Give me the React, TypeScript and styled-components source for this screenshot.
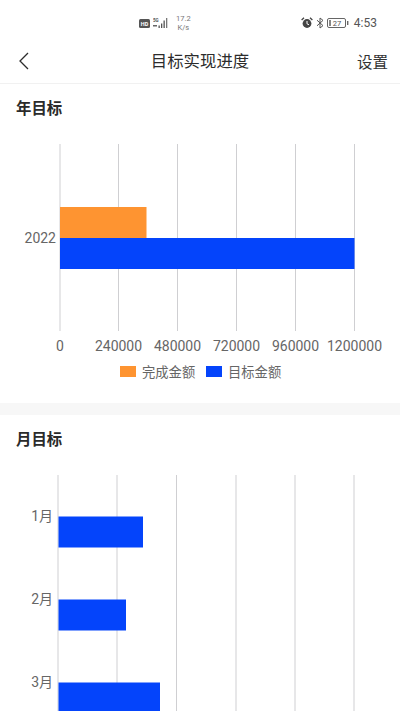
import React from "react";
import styled, { createGlobalStyle } from "styled-components";

const Global = createGlobalStyle`
  html, body { margin: 0; padding: 0; background: #fff; overflow: hidden; }
  body { font-family: "Noto Sans CJK SC", "Noto Sans", sans-serif; }
`;
const Page = styled.div`
  width: 400px; height: 711px; overflow: hidden; background: #fff;
  display: flex; flex-direction: column;
`;
const StatusBar = styled.div`
  height: 42px; flex: none; box-sizing: border-box; padding: 12px 23px 0 139px;
  display: flex; align-items: flex-start; justify-content: space-between; color: #555;
`;
const StatusGroup = styled.div`
  display: flex; align-items: center; gap: 3px; height: 22px;
`;
const Speed = styled.div`
  font-family: "Roboto", sans-serif; font-size: 7.5px; line-height: 9px; color: #777;
  text-align: center; margin-left: 3px;
`;
const Clock = styled.span`
  font-family: "Roboto", sans-serif; font-size: 12px; color: #555; margin-left: 2px;
`;
const NavBar = styled.header`
  height: 42px; flex: none; box-sizing: border-box; border-bottom: 1px solid #f1f1f1;
  display: flex; align-items: center; justify-content: space-between;
  padding: 0 12px 3px 18px; position: relative;
`;
const NavTitle = styled.h1`
  position: absolute; left: 0; right: 0; top: 6px; margin: 0; text-align: center;
  font-size: 16.4px; line-height: 24px; font-weight: 400; color: #2c2c2c; pointer-events: none;
`;
const NavAction = styled.span`
  font-size: 15.5px; line-height: 24px; color: #333;
`;
const Section = styled.section`
  flex: none; display: flex; flex-direction: column;
`;
const SectionTitle = styled.h2`
  margin: 0; padding: 12px 0 1px 16px; font-size: 15.4px; line-height: 22px;
  font-weight: 700; color: #2b2b2b;
`;
const Band = styled.div`
  height: 12px; flex: none; background: #f7f7f7;
`;
const Chart = styled.svg`
  display: block; flex: none; width: 400px;
`;
const GridLine = styled.line`
  stroke: #cfcfd2; stroke-width: 1;
`;
const AxisLabel = styled.text`
  font-family: "Roboto", "Noto Sans CJK SC", sans-serif; font-size: 14px; fill: #666;
`;
const LegendLabel = styled.text`
  font-family: "Noto Sans CJK SC", sans-serif; font-size: 13.3px; fill: #666;
`;

const ORANGE = "#fe9431";
const BLUE = "#0444fb";

const yearGrid = [60, 118.5, 177.5, 236.5, 295.5, 354.5];
const yearTicks = ["0", "240000", "480000", "720000", "960000", "1200000"];
const monthGrid = [58, 117, 176.5, 236, 295, 354];
const months = [
  { label: "1月", y: 55, right: 143 },
  { label: "2月", y: 138, right: 126 },
  { label: "3月", y: 221, right: 160 },
];

const IconHD = () => (
  <svg width="11" height="9" viewBox="0 0 11 9">
    <rect width="11" height="9" rx="1.5" fill="#555" />
    <text x="5.5" y="6.6" fontSize="5.5" fontWeight="700" fontFamily="Roboto" textAnchor="middle" fill="#fff">HD</text>
  </svg>
);
const IconSignal = () => (
  <svg width="17" height="12" viewBox="0 0 17 12">
    <text x="0" y="5" fontSize="4.5" fontWeight="700" fontFamily="Roboto" fill="#555">5G</text>
    <rect x="0" y="8" width="4" height="1.5" fill="#666" />
    <rect x="5.5" y="8.5" width="1.3" height="2.5" fill="#555" />
    <rect x="8" y="6.5" width="1.3" height="4.5" fill="#555" />
    <rect x="10.5" y="3.5" width="1.3" height="7.5" fill="#555" />
    <rect x="13" y="1" width="1.3" height="10" fill="#777" />
  </svg>
);
const IconAlarm = () => (
  <svg width="12" height="12" viewBox="0 0 12 12">
    <circle cx="6" cy="6.5" r="4.4" fill="#444" />
    <path d="M6 4v2.8l2 1" stroke="#fff" strokeWidth="1" fill="none" />
    <path d="M.6 3 3 .8M11.4 3 9 .8" stroke="#444" strokeWidth="1.3" />
  </svg>
);
const IconBluetooth = () => (
  <svg width="8" height="12" viewBox="0 0 8 12" fill="none" stroke="#555" strokeWidth="1">
    <path d="M1 3.2 7 8.6 4 11V1l3 2.4L1 8.8" />
  </svg>
);
const IconBattery = () => (
  <svg width="22" height="10" viewBox="0 0 22 10">
    <rect x=".5" y=".5" width="18" height="9" rx="1.5" fill="none" stroke="#666" />
    <rect x="2" y="2" width="2" height="6" fill="#888" />
    <text x="10" y="7.8" fontSize="7.5" fontFamily="Roboto" textAnchor="middle" fill="#555">27</text>
    <rect x="20" y="3" width="1.4" height="4" fill="#666" />
  </svg>
);
const IconBack = () => (
  <svg width="12" height="18" viewBox="0 0 12 18" fill="none" stroke="#2c2c2c" strokeWidth="1.3">
    <path d="M10 1 2 9l8 8" />
  </svg>
);

export default function App() {
  return (
    <Page>
      <Global />
      <StatusBar>
        <StatusGroup>
          <IconHD />
          <IconSignal />
          <Speed>17.2<br />K/s</Speed>
        </StatusGroup>
        <StatusGroup>
          <IconAlarm />
          <IconBluetooth />
          <IconBattery />
          <Clock>4:53</Clock>
        </StatusGroup>
      </StatusBar>
      <NavBar>
        <IconBack />
        <NavTitle>目标实现进度</NavTitle>
        <NavAction>设置</NavAction>
      </NavBar>
      <Section>
        <SectionTitle>年目标</SectionTitle>
        <Chart height="284" viewBox="0 0 400 284">
          {yearGrid.map((x) => <GridLine key={x} x1={x} x2={x} y1={25} y2={212} />)}
          <rect x="60" y="88" width="86.5" height="31" fill={ORANGE} />
          <rect x="60" y="119" width="294.5" height="31" fill={BLUE} />
          <AxisLabel x="56" y="124" textAnchor="end">2022</AxisLabel>
          {yearTicks.map((t, i) => (
            <AxisLabel key={t} x={yearGrid[i]} y="232" textAnchor="middle">{t}</AxisLabel>
          ))}
          <rect x="120" y="247" width="16" height="11" fill={ORANGE} />
          <LegendLabel x="142" y="258">完成金额</LegendLabel>
          <rect x="206" y="247" width="16" height="11" fill={BLUE} />
          <LegendLabel x="228" y="258">目标金额</LegendLabel>
        </Chart>
      </Section>
      <Band />
      <Section>
        <SectionTitle>月目标</SectionTitle>
        <Chart height="261" viewBox="0 0 400 261">
          {monthGrid.map((x) => <GridLine key={x} x1={x} x2={x} y1={25} y2={261} />)}
          {months.map((m) => (
            <React.Fragment key={m.label}>
              <rect x="58.5" y={m.y + 11.5} width={m.right - 58.5} height="31" fill={BLUE} />
              <AxisLabel x="53" y={m.y + 16} textAnchor="end">{m.label}</AxisLabel>
            </React.Fragment>
          ))}
        </Chart>
      </Section>
    </Page>
  );
}
